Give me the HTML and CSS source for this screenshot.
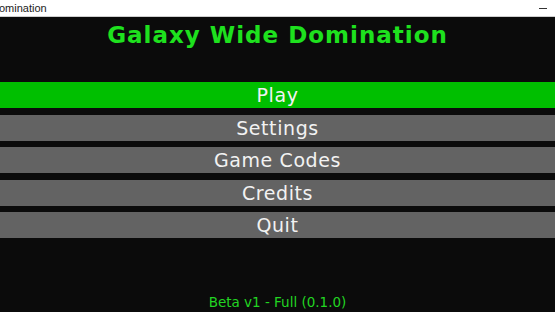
FILE: index.html
```html
<!DOCTYPE html>
<html>
<head>
    <meta charset="utf-8" />
    <title>Galaxy Wide Domination</title>
    <link rel="stylesheet" href="styles.css">
</head>
<body>
    <div class="titlebar">
        <span class="win-title">omination</span>
        <span class="win-min"></span>
    </div>
    <main class="game">
        <h1>Galaxy Wide Domination</h1>
        <nav class="menu">
            <div class="btn active">Play</div>
            <div class="btn">Settings</div>
            <div class="btn">Game Codes</div>
            <div class="btn">Credits</div>
            <div class="btn">Quit</div>
        </nav>
        <footer>Beta v1 - Full (0.1.0)</footer>
    </main>
</body>
</html>
```

FILE: styles.css
```css
* {padding: 0;margin: 0;box-sizing: border-box;}
html, body {height: 100%;}
body {display: flex;flex-direction: column;background: #0b0b0b;font-family: "DejaVu Sans", sans-serif;overflow: hidden;}

.titlebar {height: 17px;background: #fff;display: flex;align-items: center;justify-content: space-between;border-bottom: 1px solid #cfcfcf;}
.win-title {font-family: "Liberation Sans", Arial, sans-serif;font-size: 11px;color: #222;margin-left: -1px;}
.win-min {width: 8px;height: 1px;background: #333;margin-right: 8px;}

.game {flex: 1;display: flex;flex-direction: column;}
h1 {color: #1ee11e;font-size: 23px;font-weight: bold;text-align: center;letter-spacing: 1px;line-height: 32px;margin-top: 2px;}

.menu {display: flex;flex-direction: column;gap: 6.5px;margin-top: 31px;}
.btn {height: 26px;line-height: 26px;background: #636363;color: #f2f2f2;text-align: center;font-size: 19px;letter-spacing: 0.6px;}
.btn.active {background: #00bf00;}

footer {margin-top: auto;text-align: center;color: #22d522;font-size: 13.5px;line-height: 18px;padding-bottom: 1px;}
```
